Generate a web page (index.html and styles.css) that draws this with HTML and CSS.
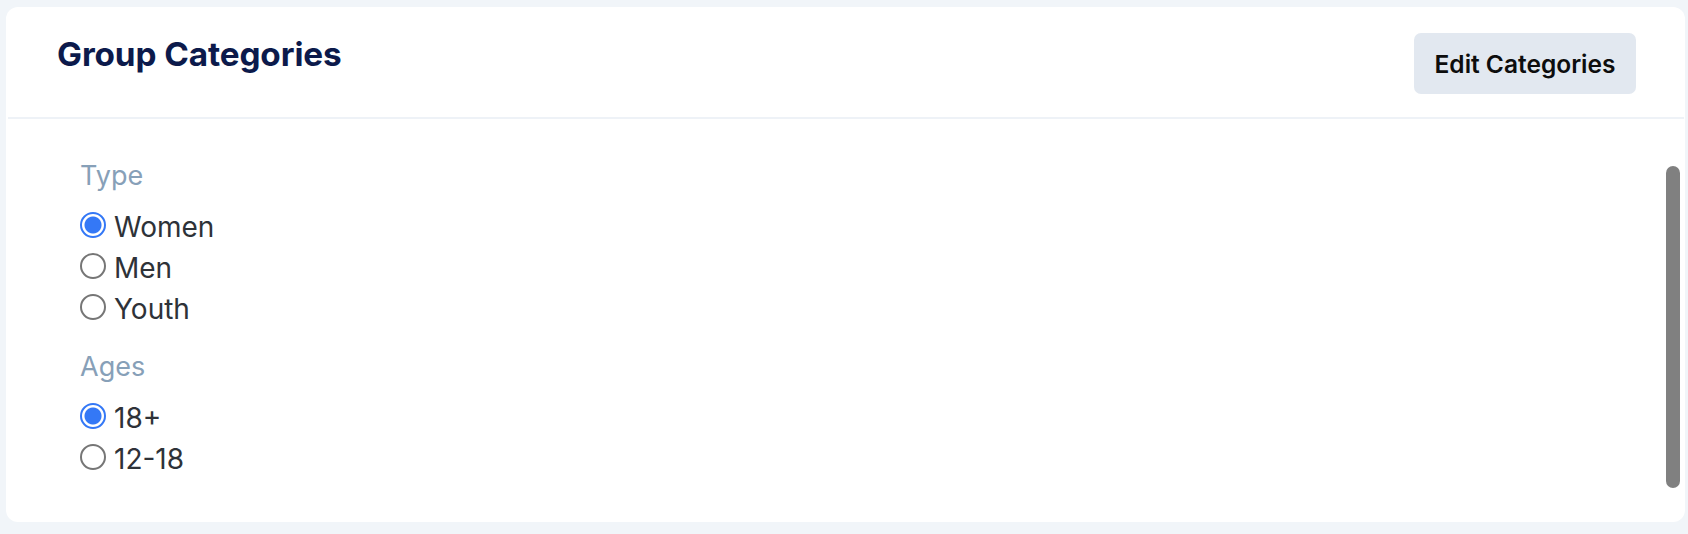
FILE: index.html
```html
<!DOCTYPE html>
<html>
<head>
<meta charset="utf-8">
<link rel="stylesheet" href="styles.css">
</head>
<body>
<div class="card">
  <div class="card-header">
    <h2 class="title">Group Categories</h2>
    <button class="edit-btn">Edit Categories</button>
  </div>
  <div class="card-body">
    <div class="group">
      <div class="group-label">Type</div>
      <label class="opt"><input type="radio" name="type" checked><span>Women</span></label>
      <label class="opt"><input type="radio" name="type"><span>Men</span></label>
      <label class="opt"><input type="radio" name="type"><span>Youth</span></label>
    </div>
    <div class="group">
      <div class="group-label">Ages</div>
      <label class="opt"><input type="radio" name="age" checked><span>18+</span></label>
      <label class="opt"><input type="radio" name="age"><span>12-18</span></label>
    </div>
    <div class="scrollbar"></div>
  </div>
</div>
</body>
</html>
```

FILE: styles.css
```css
html, body {
  margin: 0;
  padding: 0;
  background: #f1f5f9;
  font-family: Inter, "Liberation Sans", sans-serif;
}
.card {
  margin: 7px 3px 0 6px;
  width: 1679px;
  height: 515px;
  background: #ffffff;
  border-radius: 12px;
  display: flex;
  flex-direction: column;
  overflow: hidden;
}
.card-header {
  height: 112px;
  display: flex;
  justify-content: space-between;
  align-items: flex-start;
  padding: 0 48px 0 49px;
  border-bottom: 2px solid #eef2f7;
  margin: 0 1px 0 2px;
  box-sizing: border-box;
  flex: none;
}
.title {
  margin: 27px 0 0 0;
  font-size: 33.3px;
  line-height: 40px;
  font-weight: 700;
  color: #0c1a4b;
  letter-spacing: -0.1px;
}
.edit-btn {
  margin-top: 26px;
  width: 222px;
  height: 61px;
  border: none;
  border-radius: 7px;
  background: #e2e8f0;
  color: #0d0d0d;
  font-family: Inter, "Liberation Sans", sans-serif;
  font-size: 24.5px;
  font-weight: 600;
  padding: 0;
}
.card-body {
  position: relative;
  flex: 1;
  padding: 37px 0 0 74px;
}
.group {
  display: flex;
  flex-direction: column;
  margin-bottom: 18px;
}
.group-label {
  font-size: 27px;
  line-height: 40px;
  color: #87a0b8;
  margin-bottom: 10px;
}
.opt {
  display: flex;
  align-items: center;
  height: 41px;
  font-size: 28px;
  color: #2e3238;
}
.opt input {
  appearance: none;
  -webkit-appearance: none;
  margin: 0 8px 0 0;
  width: 26px;
  height: 26px;
  border-radius: 50%;
  border: 2px solid #767676;
  box-sizing: border-box;
  background: #fff;
  position: relative;
  top: -2px;
}
.opt input:checked {
  border: 2px solid #3478f6;
  background: radial-gradient(circle, #3478f6 0, #3478f6 8px, #fff 9px);
}
.scrollbar {
  position: absolute;
  right: 5px;
  top: 47px;
  width: 14px;
  height: 322px;
  border-radius: 7px;
  background: #808080;
}
```
